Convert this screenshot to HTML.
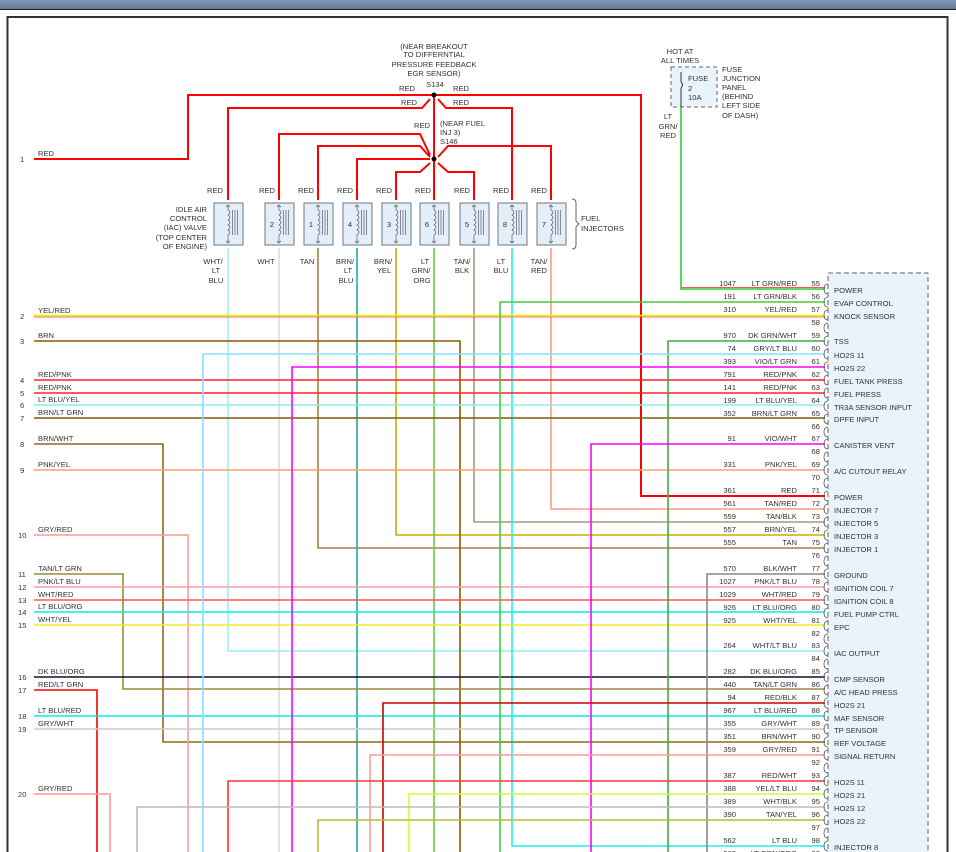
<!DOCTYPE html>
<html><head><meta charset="utf-8"><style>
html,body{margin:0;padding:0;background:#fff;width:956px;height:852px;overflow:hidden}
svg{display:block}
text{font-family:"Liberation Sans",sans-serif;font-size:7.6px;fill:#333}
.r{text-anchor:end}.m{text-anchor:middle}
</style></head><body>
<svg width="956" height="852" viewBox="0 0 956 852" xmlns="http://www.w3.org/2000/svg">
<defs><linearGradient id="g" x1="0" y1="0" x2="0" y2="1"><stop offset="0" stop-color="#7d97b3"/><stop offset="1" stop-color="#5f7a98"/></linearGradient></defs>
<rect x="0" y="0" width="956" height="9" fill="url(#g)"/>
<rect x="0" y="9" width="956" height="1" fill="#222"/>
<rect x="7.5" y="17" width="940" height="850" fill="#fff" stroke="#333" stroke-width="2"/>

<rect x="828" y="273" width="100" height="600" fill="#e8f3fc" stroke="#666" stroke-dasharray="5,3"/>

<rect x="671" y="67" width="46" height="40" fill="#e8f3fc" stroke="#666" stroke-dasharray="4,3"/>
<text x="688" y="81">FUSE</text><text x="688" y="91">2</text><text x="688" y="100">10A</text>
<path d="M681 72 v10 m0 6 v19" stroke="#333" stroke-width="1" fill="none"/>
<path d="M681 82 q3 3 0 6" stroke="#333" fill="none"/>
<text x="680" y="54" class="m">HOT AT</text><text x="680" y="63" class="m">ALL TIMES</text>
<text x="722" y="72">FUSE</text><text x="722" y="81">JUNCTION</text><text x="722" y="90">PANEL</text><text x="722" y="99">(BEHIND</text><text x="722" y="108">LEFT SIDE</text><text x="722" y="118">OF DASH)</text>
<text x="668" y="119" class="m">LT</text><text x="668" y="129" class="m">GRN/</text><text x="668" y="138" class="m">RED</text>

<g fill="none" stroke-width="1.6">
<path d="M34 159H188V95H641V496H825" stroke="#f00" stroke-width="2"/>
<path d="M434 95V159" stroke="#f00" stroke-width="2"/>
<path d="M430 99L422 108H228V200M438 99L446 108H512V200" stroke="#f00" stroke-width="2"/>
<path d="M430 155L420 134H279V200M430 157L420 146H318V200M430 159H357V200M430 163L420 172H396V200M438 157L448 146H551V200M438 163L448 172H474V200M434 159V200" stroke="#f00" stroke-width="2"/>
<path d="M681 107V289H825" stroke="#3c3"/>
<path d="M681 287.5H825" stroke="#f55" stroke-width="1"/>
<path d="M228 248V651H825" stroke="#9ef"/>
<path d="M279 248V852" stroke="#ddd"/>
<path d="M318 248V548H825" stroke="#a08040"/>
<path d="M357 248V852" stroke="#2aa"/>
<path d="M396 248V535H825" stroke="#c8b000"/>
<path d="M434 248V852" stroke="#6c4"/>
<path d="M474 248V522H825" stroke="#a89878"/>
<path d="M512 248V846H825" stroke="#2ee"/>
<path d="M551 248V509H825" stroke="#f98"/>
<path d="M34 315.5H825" stroke="#ee0"/>
<path d="M34 317H825" stroke="#f40" stroke-width="0.8"/>
<path d="M34 341H460V852" stroke="#8b5a00"/>
<path d="M34 380H825" stroke="#f22"/>
<path d="M34 393H825" stroke="#f22"/>
<path d="M34 405H825" stroke="#8ee"/>
<path d="M34 418H825" stroke="#7a5a10"/>
<path d="M34 444H163V742H825" stroke="#8b6a20"/>
<path d="M34 470H825" stroke="#f9a070"/>
<path d="M34 535H188V852" stroke="#f99"/>
<path d="M34 574H123V689H825" stroke="#9a8a3a"/>
<path d="M34 587H825" stroke="#f9a"/>
<path d="M34 600H825" stroke="#f55"/>
<path d="M34 612H825" stroke="#0ee"/>
<path d="M34 625H825" stroke="#ee2"/>
<path d="M34 677H825" stroke="#113"/>
<path d="M34 690H97V852" stroke="#f00"/>
<path d="M34 716H825" stroke="#0ee"/>
<path d="M34 729H825" stroke="#ccc"/>
<path d="M34 794H110V852" stroke="#f99"/>
<path d="M500 852V302H825" stroke="#4c4"/>
<path d="M668 852V341H825" stroke="#4a4"/>
<path d="M203 852V354H825" stroke="#8df"/>
<path d="M292 852V367H825" stroke="#f0f"/>
<path d="M591 852V444H825" stroke="#f0f"/>
<path d="M707 852V574H825" stroke="#888"/>
<path d="M383 852V703H825" stroke="#c00"/>
<path d="M370 852V755H825" stroke="#f99"/>
<path d="M228 852V781H825" stroke="#f33"/>
<path d="M409 852V794H825" stroke="#cf3"/>
<path d="M137 852V807H825" stroke="#bbb"/>
<path d="M318 852V820H825" stroke="#bb3"/>
</g>
<circle cx="434" cy="95" r="2.5" fill="#000"/><circle cx="434" cy="159" r="2.5" fill="#000"/>

<g fill="#e4eef8" stroke="#6a7a8a" stroke-width="1">
<rect x="214" y="203" width="29" height="42"/><rect x="265" y="203" width="29" height="42"/><rect x="304" y="203" width="29" height="42"/><rect x="343" y="203" width="29" height="42"/><rect x="382" y="203" width="29" height="42"/><rect x="420" y="203" width="29" height="42"/><rect x="460" y="203" width="29" height="42"/><rect x="498" y="203" width="29" height="42"/><rect x="537" y="203" width="29" height="42"/>
</g>
<g fill="none" stroke="#445" stroke-width="0.6">
<path id="c" d="M228 205v5 q4 2 0 5 q4 2 0 5 q4 2 0 5 q4 2 0 5 q4 2 0 5 v8 M226 207l2-2 2 2 M226 241l2 2 2-2 M232.5 210v25 M235 210v25 M237.5 210v25"/>
<use href="#c" x="51"/><use href="#c" x="90"/><use href="#c" x="129"/><use href="#c" x="168"/><use href="#c" x="206"/><use href="#c" x="246"/><use href="#c" x="284"/><use href="#c" x="323"/>
</g>
<text x="272" y="227" class="m">2</text><text x="311" y="227" class="m">1</text><text x="350" y="227" class="m">4</text><text x="389" y="227" class="m">3</text><text x="427" y="227" class="m">6</text><text x="467" y="227" class="m">5</text><text x="505" y="227" class="m">8</text><text x="544" y="227" class="m">7</text>
<path d="M572 199q4 0 4 4v18l3 3-3 3v18q0 4-4 4" fill="none" stroke="#666"/>
<text x="581" y="221">FUEL</text><text x="581" y="231">INJECTORS</text>
<text x="207" y="212" class="r">IDLE AIR</text><text x="207" y="221" class="r">CONTROL</text><text x="207" y="230" class="r">(IAC) VALVE</text><text x="207" y="240" class="r">(TOP CENTER</text><text x="207" y="249" class="r">OF ENGINE)</text>

<text x="215" y="193" class="m">RED</text><text x="267" y="193" class="m">RED</text><text x="306" y="193" class="m">RED</text><text x="345" y="193" class="m">RED</text><text x="384" y="193" class="m">RED</text><text x="423" y="193" class="m">RED</text><text x="462" y="193" class="m">RED</text><text x="501" y="193" class="m">RED</text><text x="539" y="193" class="m">RED</text>
<text x="407" y="91" class="m">RED</text><text x="409" y="105" class="m">RED</text><text x="461" y="91" class="m">RED</text><text x="461" y="105" class="m">RED</text><text x="422" y="128" class="m">RED</text>
<text x="434" y="49" class="m">(NEAR BREAKOUT</text><text x="434" y="57" class="m">TO DIFFERNTIAL</text><text x="434" y="67" class="m">PRESSURE FEEDBACK</text><text x="434" y="76" class="m">EGR SENSOR)</text><text x="435" y="87" class="m">S134</text>
<text x="440" y="126">(NEAR FUEL</text><text x="440" y="135">INJ 3)</text><text x="440" y="144">S146</text>
<text x="213" y="264" class="m">WHT/</text><text x="216" y="273" class="m">LT</text><text x="216" y="283" class="m">BLU</text>
<text x="266" y="264" class="m">WHT</text><text x="307" y="264" class="m">TAN</text>
<text x="345" y="264" class="m">BRN/</text><text x="348" y="273" class="m">LT</text><text x="346" y="283" class="m">BLU</text>
<text x="383" y="264" class="m">BRN/</text><text x="384" y="273" class="m">YEL</text>
<text x="425" y="264" class="m">LT</text><text x="421" y="273" class="m">GRN/</text><text x="422" y="283" class="m">ORG</text>
<text x="462" y="264" class="m">TAN/</text><text x="462" y="273" class="m">BLK</text>
<text x="501" y="264" class="m">LT</text><text x="501" y="273" class="m">BLU</text>
<text x="539" y="264" class="m">TAN/</text><text x="539" y="273" class="m">RED</text>

<g>
<text x="20" y="162">1</text><text x="38" y="156">RED</text>
<text x="20" y="319">2</text><text x="38" y="313">YEL/RED</text>
<text x="20" y="344">3</text><text x="38" y="338">BRN</text>
<text x="20" y="383">4</text><text x="38" y="377">RED/PNK</text>
<text x="20" y="396">5</text><text x="38" y="390">RED/PNK</text>
<text x="20" y="408">6</text><text x="38" y="402">LT BLU/YEL</text>
<text x="20" y="421">7</text><text x="38" y="415">BRN/LT GRN</text>
<text x="20" y="447">8</text><text x="38" y="441">BRN/WHT</text>
<text x="20" y="473">9</text><text x="38" y="467">PNK/YEL</text>
<text x="18" y="538">10</text><text x="38" y="532">GRY/RED</text>
<text x="18" y="577">11</text><text x="38" y="571">TAN/LT GRN</text>
<text x="18" y="590">12</text><text x="38" y="584">PNK/LT BLU</text>
<text x="18" y="603">13</text><text x="38" y="597">WHT/RED</text>
<text x="18" y="615">14</text><text x="38" y="609">LT BLU/ORG</text>
<text x="18" y="628">15</text><text x="38" y="622">WHT/YEL</text>
<text x="18" y="680">16</text><text x="38" y="674">DK BLU/ORG</text>
<text x="18" y="693">17</text><text x="38" y="687">RED/LT GRN</text>
<text x="18" y="719">18</text><text x="38" y="713">LT BLU/RED</text>
<text x="18" y="732">19</text><text x="38" y="726">GRY/WHT</text>
<text x="18" y="797">20</text><text x="38" y="791">GRY/RED</text>
<text x="38" y="857">GRN</text>
</g>

<g>
<text x="736" y="286" class="r">1047</text><text x="797" y="286" class="r">LT GRN/RED</text><text x="820" y="286" class="r">55</text>
<text x="736" y="299" class="r">191</text><text x="797" y="299" class="r">LT GRN/BLK</text><text x="820" y="299" class="r">56</text>
<text x="736" y="312" class="r">310</text><text x="797" y="312" class="r">YEL/RED</text><text x="820" y="312" class="r">57</text>
<text x="820" y="325" class="r">58</text>
<text x="736" y="338" class="r">970</text><text x="797" y="338" class="r">DK GRN/WHT</text><text x="820" y="338" class="r">59</text>
<text x="736" y="351" class="r">74</text><text x="797" y="351" class="r">GRY/LT BLU</text><text x="820" y="351" class="r">60</text>
<text x="736" y="364" class="r">393</text><text x="797" y="364" class="r">VIO/LT GRN</text><text x="820" y="364" class="r">61</text>
<text x="736" y="377" class="r">791</text><text x="797" y="377" class="r">RED/PNK</text><text x="820" y="377" class="r">62</text>
<text x="736" y="390" class="r">141</text><text x="797" y="390" class="r">RED/PNK</text><text x="820" y="390" class="r">63</text>
<text x="736" y="403" class="r">199</text><text x="797" y="403" class="r">LT BLU/YEL</text><text x="820" y="403" class="r">64</text>
<text x="736" y="416" class="r">352</text><text x="797" y="416" class="r">BRN/LT GRN</text><text x="820" y="416" class="r">65</text>
<text x="820" y="429" class="r">66</text>
<text x="736" y="441" class="r">91</text><text x="797" y="441" class="r">VIO/WHT</text><text x="820" y="441" class="r">67</text>
<text x="820" y="454" class="r">68</text>
<text x="736" y="467" class="r">331</text><text x="797" y="467" class="r">PNK/YEL</text><text x="820" y="467" class="r">69</text>
<text x="820" y="480" class="r">70</text>
<text x="736" y="493" class="r">361</text><text x="797" y="493" class="r">RED</text><text x="820" y="493" class="r">71</text>
<text x="736" y="506" class="r">561</text><text x="797" y="506" class="r">TAN/RED</text><text x="820" y="506" class="r">72</text>
<text x="736" y="519" class="r">559</text><text x="797" y="519" class="r">TAN/BLK</text><text x="820" y="519" class="r">73</text>
<text x="736" y="532" class="r">557</text><text x="797" y="532" class="r">BRN/YEL</text><text x="820" y="532" class="r">74</text>
<text x="736" y="545" class="r">555</text><text x="797" y="545" class="r">TAN</text><text x="820" y="545" class="r">75</text>
<text x="820" y="558" class="r">76</text>
<text x="736" y="571" class="r">570</text><text x="797" y="571" class="r">BLK/WHT</text><text x="820" y="571" class="r">77</text>
<text x="736" y="584" class="r">1027</text><text x="797" y="584" class="r">PNK/LT BLU</text><text x="820" y="584" class="r">78</text>
<text x="736" y="597" class="r">1029</text><text x="797" y="597" class="r">WHT/RED</text><text x="820" y="597" class="r">79</text>
<text x="736" y="610" class="r">926</text><text x="797" y="610" class="r">LT BLU/ORG</text><text x="820" y="610" class="r">80</text>
<text x="736" y="623" class="r">925</text><text x="797" y="623" class="r">WHT/YEL</text><text x="820" y="623" class="r">81</text>
<text x="820" y="636" class="r">82</text>
<text x="736" y="648" class="r">264</text><text x="797" y="648" class="r">WHT/LT BLU</text><text x="820" y="648" class="r">83</text>
<text x="820" y="661" class="r">84</text>
<text x="736" y="674" class="r">282</text><text x="797" y="674" class="r">DK BLU/ORG</text><text x="820" y="674" class="r">85</text>
<text x="736" y="687" class="r">440</text><text x="797" y="687" class="r">TAN/LT GRN</text><text x="820" y="687" class="r">86</text>
<text x="736" y="700" class="r">94</text><text x="797" y="700" class="r">RED/BLK</text><text x="820" y="700" class="r">87</text>
<text x="736" y="713" class="r">967</text><text x="797" y="713" class="r">LT BLU/RED</text><text x="820" y="713" class="r">88</text>
<text x="736" y="726" class="r">355</text><text x="797" y="726" class="r">GRY/WHT</text><text x="820" y="726" class="r">89</text>
<text x="736" y="739" class="r">351</text><text x="797" y="739" class="r">BRN/WHT</text><text x="820" y="739" class="r">90</text>
<text x="736" y="752" class="r">359</text><text x="797" y="752" class="r">GRY/RED</text><text x="820" y="752" class="r">91</text>
<text x="820" y="765" class="r">92</text>
<text x="736" y="778" class="r">387</text><text x="797" y="778" class="r">RED/WHT</text><text x="820" y="778" class="r">93</text>
<text x="736" y="791" class="r">388</text><text x="797" y="791" class="r">YEL/LT BLU</text><text x="820" y="791" class="r">94</text>
<text x="736" y="804" class="r">389</text><text x="797" y="804" class="r">WHT/BLK</text><text x="820" y="804" class="r">95</text>
<text x="736" y="817" class="r">390</text><text x="797" y="817" class="r">TAN/YEL</text><text x="820" y="817" class="r">96</text>
<text x="820" y="830" class="r">97</text>
<text x="736" y="843" class="r">562</text><text x="797" y="843" class="r">LT BLU</text><text x="820" y="843" class="r">98</text>
<text x="736" y="856" class="r">563</text><text x="797" y="856" class="r">LT GRN/ORG</text><text x="820" y="856" class="r">99</text>
</g>
<path d="M828 284q-4 0-4 5t4 5 M828 297q-4 0-4 5t4 5 M828 310q-4 0-4 5t4 5 M828 323q-4 0-4 5t4 5 M828 336q-4 0-4 5t4 5 M828 349q-4 0-4 5t4 5 M828 362q-4 0-4 5t4 5 M828 375q-4 0-4 5t4 5 M828 388q-4 0-4 5t4 5 M828 401q-4 0-4 5t4 5 M828 414q-4 0-4 5t4 5 M828 427q-4 0-4 5t4 5 M828 439q-4 0-4 5t4 5 M828 452q-4 0-4 5t4 5 M828 465q-4 0-4 5t4 5 M828 478q-4 0-4 5t4 5 M828 491q-4 0-4 5t4 5 M828 504q-4 0-4 5t4 5 M828 517q-4 0-4 5t4 5 M828 530q-4 0-4 5t4 5 M828 543q-4 0-4 5t4 5 M828 556q-4 0-4 5t4 5 M828 569q-4 0-4 5t4 5 M828 582q-4 0-4 5t4 5 M828 595q-4 0-4 5t4 5 M828 608q-4 0-4 5t4 5 M828 621q-4 0-4 5t4 5 M828 634q-4 0-4 5t4 5 M828 646q-4 0-4 5t4 5 M828 659q-4 0-4 5t4 5 M828 672q-4 0-4 5t4 5 M828 685q-4 0-4 5t4 5 M828 698q-4 0-4 5t4 5 M828 711q-4 0-4 5t4 5 M828 724q-4 0-4 5t4 5 M828 737q-4 0-4 5t4 5 M828 750q-4 0-4 5t4 5 M828 763q-4 0-4 5t4 5 M828 776q-4 0-4 5t4 5 M828 789q-4 0-4 5t4 5 M828 802q-4 0-4 5t4 5 M828 815q-4 0-4 5t4 5 M828 828q-4 0-4 5t4 5 M828 841q-4 0-4 5t4 5" fill="none" stroke="#555" stroke-width="0.8"/>
<g>
<text x="834" y="293">POWER</text><text x="834" y="306">EVAP CONTROL</text><text x="834" y="319">KNOCK SENSOR</text>
<text x="834" y="344">TSS</text><text x="834" y="358">HO2S 11</text><text x="834" y="371">HO2S 22</text>
<text x="834" y="384">FUEL TANK PRESS</text><text x="834" y="397">FUEL PRESS</text><text x="834" y="410">TR3A SENSOR INPUT</text>
<text x="834" y="422">DPFE INPUT</text><text x="834" y="448">CANISTER VENT</text><text x="834" y="474">A/C CUTOUT RELAY</text>
<text x="834" y="500">POWER</text><text x="834" y="513">INJECTOR 7</text><text x="834" y="526">INJECTOR 5</text>
<text x="834" y="539">INJECTOR 3</text><text x="834" y="552">INJECTOR 1</text><text x="834" y="578">GROUND</text>
<text x="834" y="591">IGNITION COIL 7</text><text x="834" y="604">IGNITION COIL 8</text><text x="834" y="617">FUEL PUMP CTRL</text>
<text x="834" y="630">EPC</text><text x="834" y="656">IAC OUTPUT</text><text x="834" y="682">CMP SENSOR</text>
<text x="834" y="695">A/C HEAD PRESS</text><text x="834" y="708">HO2S 21</text><text x="834" y="721">MAF SENSOR</text>
<text x="834" y="733">TP SENSOR</text><text x="834" y="746">REF VOLTAGE</text><text x="834" y="759">SIGNAL RETURN</text>
<text x="834" y="785">HO2S 11</text><text x="834" y="798">HO2S 21</text><text x="834" y="811">HO2S 12</text>
<text x="834" y="824">HO2S 22</text><text x="834" y="850">INJECTOR 8</text>
</g>
</svg>
</body></html>
